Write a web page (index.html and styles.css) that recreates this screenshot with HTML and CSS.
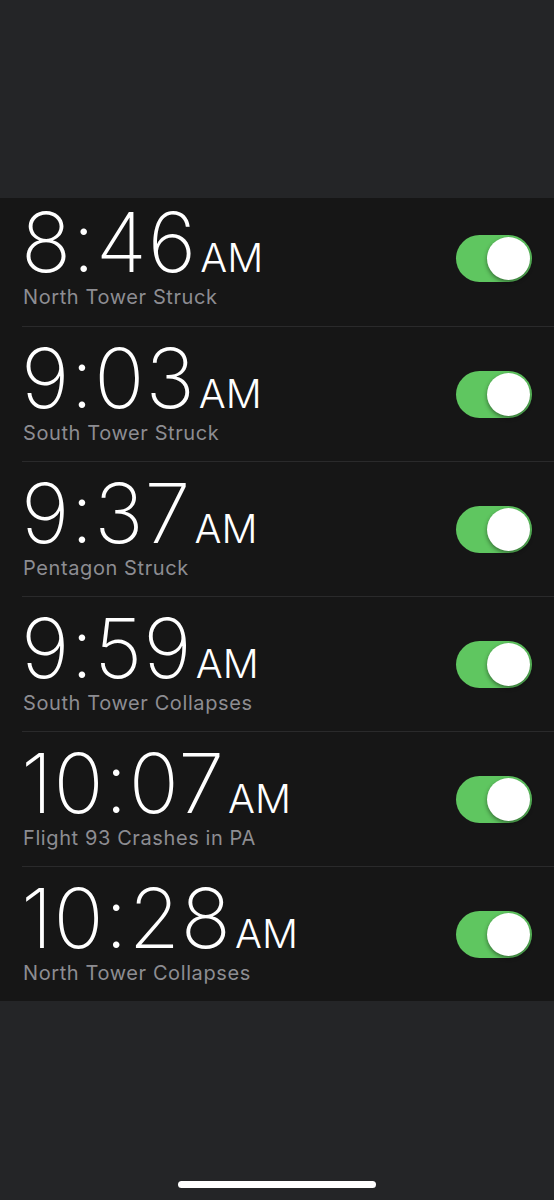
FILE: index.html
```html
<!DOCTYPE html>
<html lang="en">
<head>
  <meta charset="UTF-8">
  <meta name="viewport" content="width=device-width, initial-scale=1.0">
  <title>Alarms</title>
  <link rel="stylesheet" href="styles.css">
</head>
<body>
  <div class="top-bar"></div>

  <div class="alarms">
    <div class="alarm">
      <div class="alarm-text">
        <div class="time">8:46<span class="ampm">AM</span></div>
        <div class="label">North Tower Struck</div>
      </div>
      <div class="switch"><div class="knob"></div></div>
    </div>
    <div class="alarm">
      <div class="alarm-text">
        <div class="time">9:03<span class="ampm">AM</span></div>
        <div class="label">South Tower Struck</div>
      </div>
      <div class="switch"><div class="knob"></div></div>
    </div>
    <div class="alarm">
      <div class="alarm-text">
        <div class="time">9:37<span class="ampm">AM</span></div>
        <div class="label">Pentagon Struck</div>
      </div>
      <div class="switch"><div class="knob"></div></div>
    </div>
    <div class="alarm">
      <div class="alarm-text">
        <div class="time">9:59<span class="ampm">AM</span></div>
        <div class="label">South Tower Collapses</div>
      </div>
      <div class="switch"><div class="knob"></div></div>
    </div>
    <div class="alarm">
      <div class="alarm-text">
        <div class="time">10:07<span class="ampm">AM</span></div>
        <div class="label">Flight 93 Crashes in PA</div>
      </div>
      <div class="switch"><div class="knob"></div></div>
    </div>
    <div class="alarm">
      <div class="alarm-text">
        <div class="time">10:28<span class="ampm">AM</span></div>
        <div class="label">North Tower Collapses</div>
      </div>
      <div class="switch"><div class="knob"></div></div>
    </div>
  </div>

  <div class="bottom-bar">
    <div class="home-indicator"></div>
  </div>
</body>
</html>
```

FILE: styles.css
```css
* {
  margin: 0;
  padding: 0;
  box-sizing: border-box;
  font-family: 'Inter', 'Roboto', sans-serif;
}

body {
  background: #242527;
  width: 554px;
}

.top-bar {
  height: 198px;
  background: #242527;
}

.alarms {
  background: #161616;
}

.alarm {
  display: flex;
  align-items: center;
  justify-content: space-between;
  height: 135px;
  margin-left: 22px;
  padding: 0 22px 0 1px;
  border-top: 1px solid #2a2a2b;
}

/* first row sits partly under the header */
.alarm:first-child {
  height: 128px;
  border-top: none;
}

.alarm:first-child .alarm-text {
  padding-top: 2px;
}

.alarm:first-child .switch {
  margin-top: -7px;
}

.alarm-text {
  align-self: flex-start;
  padding-top: 9px;
}

.time {
  color: #fff;
  font-size: 83px;
  font-weight: 200;
  line-height: 85px;
  letter-spacing: 1px;
  margin-left: -2px;
}

.ampm {
  font-size: 40px;
  font-weight: 300;
  line-height: 1;
  margin-left: 3px;
  letter-spacing: 0;
}

.label {
  color: #8d8d92;
  font-size: 20px;
  line-height: 24px;
  letter-spacing: 0.6px;
}

.switch {
  width: 76px;
  height: 47px;
  border-radius: 24px;
  background: #5fc660;
  display: flex;
  align-items: center;
  justify-content: flex-end;
  padding: 2px;
}

.knob {
  width: 43px;
  height: 43px;
  border-radius: 50%;
  background: #fff;
  box-shadow: 0 2px 4px rgba(0, 0, 0, 0.45);
}

.bottom-bar {
  height: 199px;
  display: flex;
  align-items: flex-end;
  justify-content: center;
  padding-bottom: 12px;
}

.home-indicator {
  width: 198px;
  height: 7px;
  border-radius: 4px;
  background: #fff;
}
```
